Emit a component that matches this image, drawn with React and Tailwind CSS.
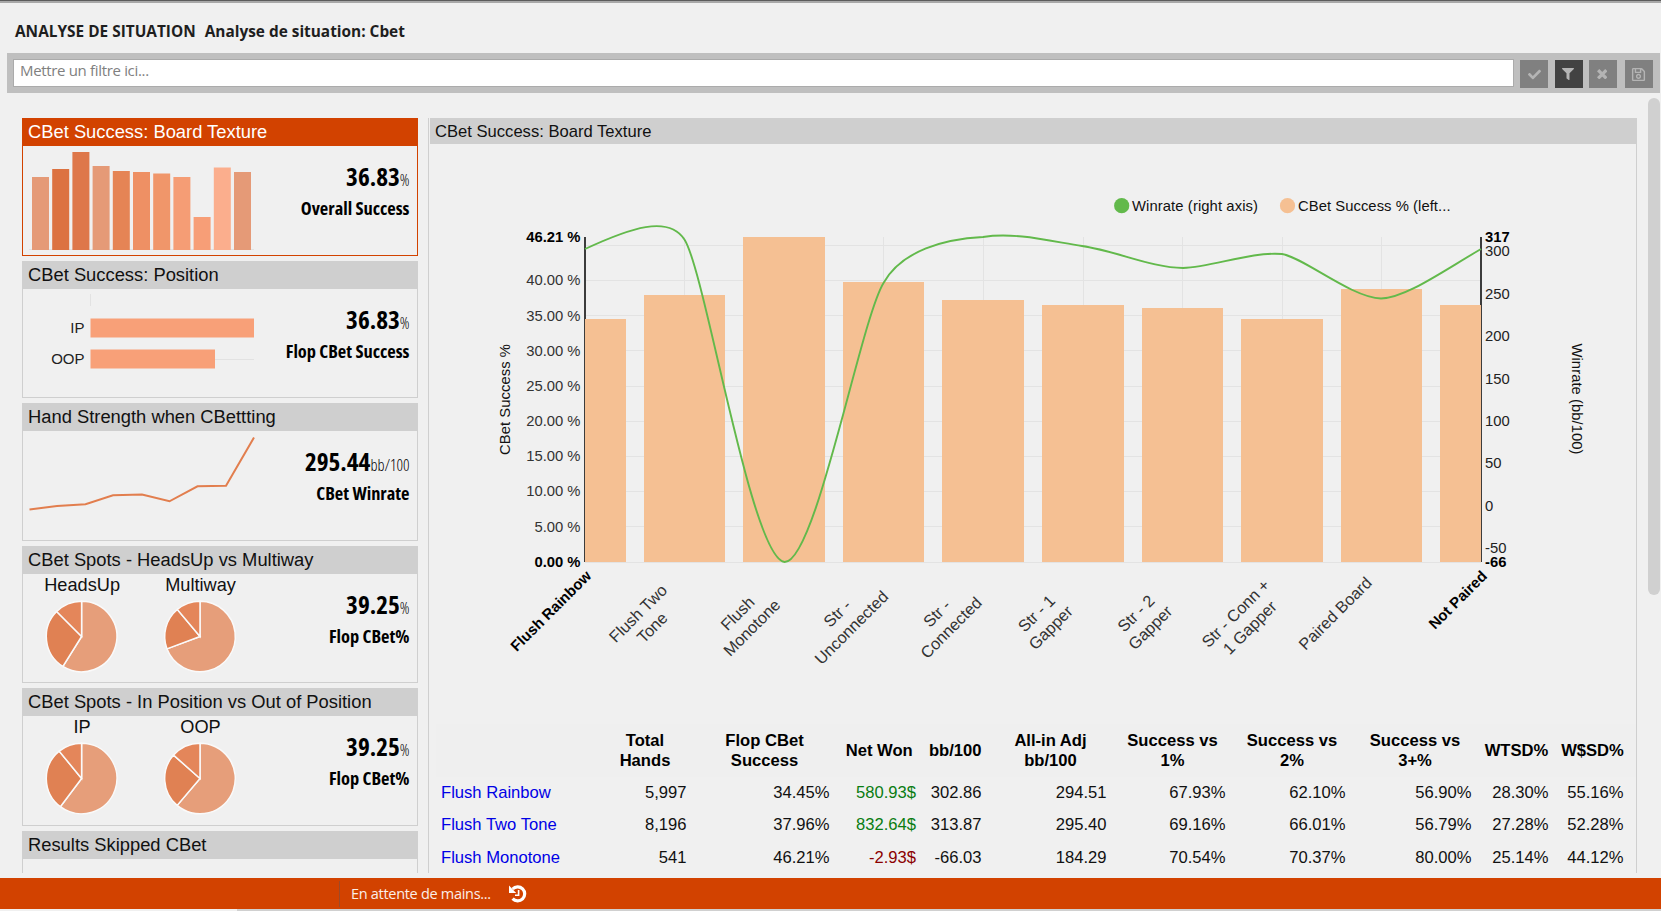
import { FaCheck, FaFilter, FaRegSave } from 'react-icons/fa';

const polar = (cx, cy, r, deg) => {
  const a = ((deg - 90) * Math.PI) / 180;
  return `${(cx + r * Math.cos(a)).toFixed(2)} ${(cy + r * Math.sin(a)).toFixed(2)}`;
};

function Pie({ cx, cy, label, stops }) {
  const angles = [0, ...stops, 360];
  const fills = ['#e69e7a', '#e08153', '#e4865a'];
  return (
    <g>
      <text x={cx + 0.5} y={17} fontSize="18.2" textAnchor="middle" fill="#111">{label}</text>
      {fills.map((fill, i) => (
        <path
          key={fill}
          d={`M${cx} ${cy}L${polar(cx, cy, 35.3, angles[i])}A35.3 35.3 0 ${angles[i + 1] - angles[i] > 180 ? 1 : 0} 1 ${polar(cx, cy, 35.3, angles[i + 1])}Z`}
          fill={fill}
          stroke="#fafafa"
          strokeWidth="1.5"
        />
      ))}
    </g>
  );
}

const miniBars = [
  [73, '#e59a77'], [81, '#dc7241'], [98, '#de774a'], [84, '#e59a77'], [79, '#e58455'], [78, '#ee9064'],
  [76.5, '#f0966a'], [73, '#f59d75'], [33, '#f79e77'], [82.5, '#fbae8d'], [78, '#e59a77'],
];

function BoardTextureSpark() {
  return (
    <>
      <path d="M6 103.5H231" stroke="#e2e2e2" />
      {miniBars.map(([h, fill], i) => (
        <rect key={i} x={9 + i * 20.2} y={104 - h} width="17" height={h} fill={fill} />
      ))}
    </>
  );
}

function PositionSpark() {
  return (
    <>
      <path d="M67.5 5V17M192 70.5H231" stroke="#e2e2e2" />
      <rect x="67.5" y="29.5" width="163.5" height="19" fill="#f8a078" />
      <rect x="67.5" y="60.5" width="124.5" height="19" fill="#f8a078" />
      <text x="61.5" y="43.5" fontSize="15" textAnchor="end" fill="#222">IP</text>
      <text x="61.5" y="74.5" fontSize="15" textAnchor="end" fill="#222">OOP</text>
    </>
  );
}

function StrengthSpark() {
  return (
    <polyline
      points="6.5,78.5 34,75 62.5,73.3 90,64.3 119,63.5 146.5,70.3 174.5,55.3 203,54.7 231,6.5"
      fill="none"
      stroke="#e27e4e"
      strokeWidth="2"
    />
  );
}

const cards = [
  { title: 'CBet Success: Board Texture', value: '36.83', unit: '%', label: 'Overall Success', chart: <BoardTextureSpark />, active: true },
  { title: 'CBet Success: Position', value: '36.83', unit: '%', label: 'Flop CBet Success', chart: <PositionSpark /> },
  { title: 'Hand Strength when CBettting', value: '295.44', unit: 'bb/100', label: 'CBet Winrate', chart: <StrengthSpark /> },
  {
    title: 'CBet Spots - HeadsUp vs Multiway', value: '39.25', unit: '%', label: 'Flop CBet%',
    chart: (
      <>
        <Pie cx={58.6} cy={62.5} label="HeadsUp" stops={[212, 315]} />
        <Pie cx={177} cy={62.5} label="Multiway" stops={[249.5, 320]} />
      </>
    ),
  },
  {
    title: 'CBet Spots - In Position vs Out of Position', value: '39.25', unit: '%', label: 'Flop CBet%',
    chart: (
      <>
        <Pie cx={58.6} cy={62.5} label="IP" stops={[217, 320.7]} />
        <Pie cx={177} cy={62.5} label="OOP" stops={[220.4, 311.5]} />
      </>
    ),
  },
  { title: 'Results Skipped CBet' },
];

function StatCard({ title, value, unit, label, chart, active }) {
  return (
    <div className={`flex h-[137.5px] shrink-0 flex-col border ${active ? 'border-[#d24200]' : 'border-[#cfcfcf]'}`}>
      <div className={`h-[27px] shrink-0 pl-[5px] text-[18.35px] leading-[26.4px] ${active ? 'bg-[#d24200] text-white' : 'bg-[#cfcfcf] text-[#111]'}`}>
        {title}
      </div>
      {chart && (
        <div className="flex">
          <svg width="240" height="108" className="shrink-0">{chart}</svg>
          <div className="flex flex-1 flex-col items-end pt-[14px] pr-[7.5px] font-['Open_Sans'] [font-stretch:75%] text-black">
            <div className="flex items-baseline whitespace-nowrap leading-[32.4px]">
              <span className="text-[25.2px] font-bold">{value}</span>
              <span className="text-[16px] font-light">{unit}</span>
            </div>
            <div className="text-[18.4px] font-bold whitespace-nowrap leading-[23px]">{label}</div>
          </div>
        </div>
      )}
    </div>
  );
}

const LEFT = 585;
const STEP = 99.6;
const barTops = [319, 295, 237, 282, 300, 305, 308, 319, 289, 305];
const leftTicks = ['5.00', '10.00', '15.00', '20.00', '25.00', '30.00', '35.00', '40.00'];
const rightTicks = [[256, '300'], [299, '250'], [341, '200'], [384, '150'], [426, '100'], [468, '50'], [511, '0'], [553, '-50']];
const categories = [
  ['Flush Two', 'Tone'],
  ['Flush', 'Monotone'],
  ['Str -', 'Unconnected'],
  ['Str -', 'Connected'],
  ['Str - 1', 'Gapper'],
  ['Str - 2', 'Gapper'],
  ['Str - Conn +', '1 Gapper'],
  ['Paired Board'],
];
const winrate =
  'M585 249C630 228 668.6 214.6 684.6 239.7C706 274 751 558 784.6 562C816 562 860 322 883.5 283C902 250 945 239 983 237' +
  'C1015 232 1050 241 1082 246C1115 250.5 1152 268 1183 268C1213 267 1250 251.5 1282 254C1303 257 1352 298 1381 298.5C1405 298 1440 273 1481 249';

function WinrateChart() {
  return (
    <svg width="1207" height="579" viewBox="429 144 1207 579" className="block shrink-0" fontSize="14.8">
      <circle cx="1121.7" cy="205.7" r="7.6" fill="#62b94b" />
      <text x="1132" y="211" textLength="126" fill="#111">Winrate (right axis)</text>
      <circle cx="1287.5" cy="205.7" r="7.6" fill="#f5c093" />
      <text x="1298" y="211" textLength="152.5" fill="#111">CBet Success % (left...</text>

      {/* grid */}
      {Array.from({ length: 10 }, (_, i) => (
        <rect key={i} x={LEFT} y={Math.round(561.5 - i * 35.17)} width="896" height="1" fill="#e3e3e3" />
      ))}
      {Array.from({ length: 8 }, (_, i) => (
        <rect key={i} x={Math.floor(LEFT + (i + 1) * STEP)} y="237" width="1" height="325" fill="#e3e3e3" />
      ))}
      <rect x="584" y="237" width="2" height="325" fill="#3c3c3c" />
      <rect x="1480" y="237" width="2" height="325" fill="#3c3c3c" />

      {/* bars, the outer two are cut at the axes */}
      {barTops.map((y, i) => {
        const x0 = Math.max(585, Math.round(LEFT + i * STEP - 41));
        const x1 = Math.min(1481, Math.round(LEFT + i * STEP + 40.6));
        return <rect key={i} x={x0} y={y} width={x1 - x0} height={562 - y} fill="#f5c093" />;
      })}
      <path d={winrate} fill="none" stroke="#62b94b" strokeWidth="1.9" />

      {/* left axis */}
      <g textAnchor="end" fill="#333">
        {leftTicks.map((t, i) => (
          <text key={t} x="580.5" y={566.8 - (i + 1) * 35.17}>{t} %</text>
        ))}
        <text x="580.5" y="242" fontWeight="bold" fill="#000">46.21 %</text>
        <text x="580.5" y="567" fontWeight="bold" fill="#000">0.00 %</text>
      </g>
      <text transform="translate(510 399.5) rotate(-90)" textAnchor="middle" textLength="111" fill="#111">CBet Success %</text>

      {/* right axis */}
      <g fill="#222">
        {rightTicks.map(([y, t]) => (
          <text key={t} x="1485" y={y}>{t}</text>
        ))}
        <text x="1485" y="242" fontWeight="bold" fill="#000">317</text>
        <text x="1485" y="567" fontWeight="bold" fill="#000">-66</text>
      </g>
      <text transform="translate(1572 399) rotate(90)" textAnchor="middle" textLength="111" fill="#111">Winrate (bb/100)</text>

      {/* categories */}
      <g fontSize="16.3" textAnchor="middle" fill="#333">
        {categories.map((lines, i) =>
          lines.map((line, j) => (
            <text key={i + line} transform={`translate(${LEFT + (i + 1) * STEP - 42.6 + j * 14.2} ${617.4 + j * 14.2}) rotate(-45)`}>
              {line}
            </text>
          ))
        )}
      </g>
      <g fontSize="15" fontWeight="bold" textAnchor="end" fill="#000">
        <text transform="translate(592.3 576.7) rotate(-45)">Flush Rainbow</text>
        <text transform="translate(1488 577) rotate(-45)">Not Paired</text>
      </g>
    </svg>
  );
}

const cols = 'grid grid-cols-[161px_96px_143px_86.5px_65.5px_125px_119px_120px_126px_77px_75px] items-center';
const heads = ['', 'Total Hands', 'Flop CBet Success', 'Net Won', 'bb/100', 'All-in Adj bb/100', 'Success vs 1%', 'Success vs 2%', 'Success vs 3+%', 'WTSD%', 'W$SD%'];
const rows = [
  ['Flush Rainbow', '5,997', '34.45%', '580.93$', '302.86', '294.51', '67.93%', '62.10%', '56.90%', '28.30%', '55.16%'],
  ['Flush Two Tone', '8,196', '37.96%', '832.64$', '313.87', '295.40', '69.16%', '66.01%', '56.79%', '27.28%', '52.28%'],
  ['Flush Monotone', '541', '46.21%', '-2.93$', '-66.03', '184.29', '70.54%', '70.37%', '80.00%', '25.14%', '44.12%'],
];

function cellColor(i, cell) {
  if (i === 0) return 'pl-[5px] text-[#0000e6]';
  if (i === 3) return cell.startsWith('-') ? 'text-right text-[#8b0000]' : 'text-right text-[#0a7d12]';
  return 'text-right text-[#111]';
}

function ResultsTable() {
  return (
    <div className="mt-px ml-[7px] text-[16.6px]">
      <div className={`${cols} h-[53px] bg-[#efefef] font-bold leading-[20px] text-black`}>
        {heads.map((h) => (
          <div key={h} className={h.includes(' ') && h !== 'Net Won' ? 'px-3 text-center' : 'text-center whitespace-nowrap'}>{h}</div>
        ))}
      </div>
      {rows.map((row) => (
        <div key={row[0]} className={`${cols} h-[32.6px]`}>
          {row.map((cell, i) => (
            <div key={i} className={`pr-[6.5px] whitespace-nowrap ${cellColor(i, cell)}`}>{cell}</div>
          ))}
        </div>
      ))}
    </div>
  );
}

function CrossIcon({ size }) {
  return (
    <svg width={size} height={size} viewBox="0 0 11 11" stroke="currentColor" strokeWidth="3.4">
      <path d="M1.2 1.2L9.8 9.8M9.8 1.2L1.2 9.8" />
    </svg>
  );
}

const tools = [
  { icon: FaCheck, size: 13, box: 'bg-[#808080] pl-px' },
  { icon: FaFilter, size: 12, box: 'bg-[#424242] ml-[7px] pr-[2px]' },
  { icon: CrossIcon, size: 10.5, box: 'bg-[#808080] ml-[6px] pr-[2px]' },
  { icon: FaRegSave, size: 15, box: 'bg-[#808080] ml-[8px] pr-px' },
];

export default function App() {
  return (
    <div className="flex h-[911px] w-[1661px] flex-col overflow-hidden bg-[#f0f0f0] font-['Liberation_Sans',Arial,sans-serif]">
      <div className="h-[3px] shrink-0 border-t border-[#5c5c5c] bg-[#a8a8a8]" />

      {/* Title */}
      <header className="flex h-[50px] shrink-0 gap-[9px] pt-[18px] pl-[15px] font-['Open_Sans',sans-serif] text-[15.4px] font-bold leading-[22px] text-[#1e1e1e] whitespace-pre">
        <span>ANALYSE DE SITUATION</span>
        <span>Analyse de situation: Cbet</span>
      </header>

      {/* Filter bar */}
      <div className="ml-[7px] flex h-[40px] w-[1653px] shrink-0 bg-[#bfbfbf] pt-[6px] pl-[6px]">
        <div className="mr-[6px] h-[28px] w-[1501px] border border-[#ababab] bg-white pl-[6px] font-['Open_Sans',sans-serif] text-[15px] leading-[21px] tracking-[-0.33px] text-[#808080]">
          Mettre un filtre ici...
        </div>
        {tools.map(({ icon: Icon, size, box }, i) => (
          <button key={i} className={`mt-px flex h-[28px] w-[28px] items-center justify-center text-[#b4b4b4] ${box}`}>
            <Icon size={size} />
          </button>
        ))}
      </div>

      {/* Content */}
      <main className="flex h-[785px] shrink-0 pl-[22px]">
        <div className="mt-[25px] flex h-[755px] w-[396px] flex-col gap-[5px] overflow-hidden">
          {cards.map((c) => (
            <StatCard key={c.title} {...c} />
          ))}
        </div>

        <section className="mt-[25px] ml-[10px] h-[755px] w-[1209px] overflow-hidden border-x border-[#cfcfcf]">
          <div className="ml-px h-[26px] bg-[#cfcfcf] pl-[5px] text-[16.6px] leading-[27px] text-[#111]">
            CBet Success: Board Texture
          </div>
          <WinrateChart />
          <ResultsTable />
        </section>

        <div className="mt-[5px] ml-[11px] h-[497px] w-[12px] rounded-full bg-[#d0d0d0]" />
      </main>

      {/* Status bar */}
      <footer className="flex h-[31px] shrink-0 items-center bg-[#d24200] font-['Open_Sans',sans-serif] text-[14.5px] text-[#fbeee8]">
        <div className="ml-[339px] h-[26px] w-px bg-[#9c4a2a]" />
        <span className="ml-[11px] w-[140px] whitespace-nowrap tracking-[-0.3px]">En attente de mains...</span>
        <svg width="18" height="18" viewBox="0 0 18 18" className="ml-[17.5px]" fill="none" stroke="#fff" strokeWidth="3.2">
          <path d="M3.6 4A7 7 0 1 1 3.6 13.6" />
          <path d="M0 0.6V8H7.2Z" fill="#fff" stroke="none" />
          <path d="M9.6 5V10.2H6" strokeWidth="1.6" />
        </svg>
      </footer>
      <div className="ml-[237px] h-[2px] bg-[#d0d0d0]" />
    </div>
  );
}
